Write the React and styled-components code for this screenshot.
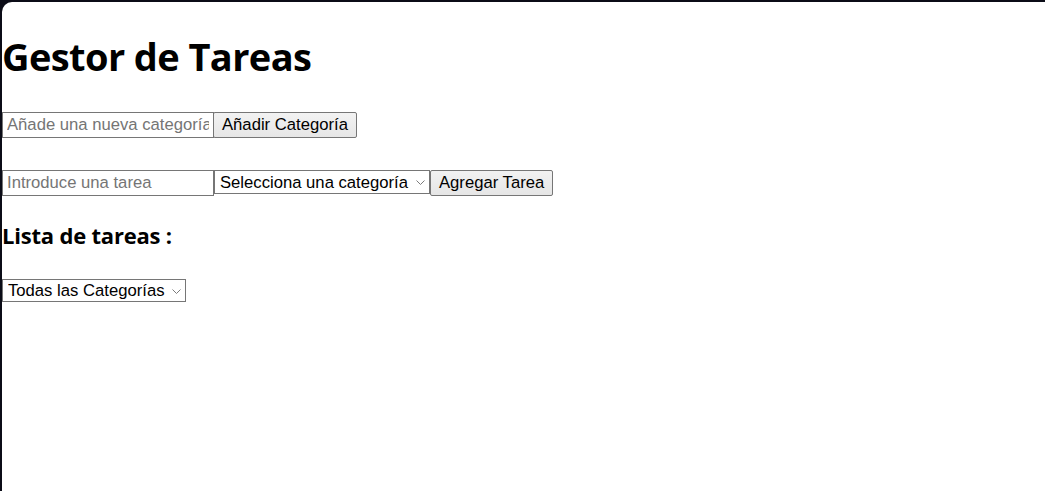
import React from "react";
import styled, { createGlobalStyle } from "styled-components";

const GlobalStyle = createGlobalStyle`
  html, body {
    margin: 0;
    height: 100%;
    background: #0b0c17;
  }
  body {
    padding: 2px 0 0 2px;
    box-sizing: border-box;
    overflow: hidden;
  }
  #root {
    height: 100%;
  }
`;

const Window = styled.div`
  height: 100%;
  background: #ffffff;
  border-top-left-radius: 10px;
  display: flex;
  flex-direction: column;
  align-items: flex-start;
  color: #000;
`;

const Title = styled.h1`
  margin: 31px 0 0 0;
  font-family: "Open Sans", "Noto Sans", sans-serif;
  font-weight: 700;
  font-size: 38px;
  line-height: 46px;
  letter-spacing: -0.6px;
`;

const Subtitle = styled.h3`
  margin: 24px 0 0 0;
  font-family: "Open Sans", "Noto Sans", sans-serif;
  font-weight: 700;
  font-size: 22px;
  line-height: 30px;
  letter-spacing: -0.2px;
`;

const FormRow = styled.div`
  display: flex;
  align-items: flex-start;
  margin-top: ${(p) => p.$top}px;
`;

const TextInput = styled.input`
  box-sizing: border-box;
  width: 212px;
  height: 26px;
  margin: 0;
  padding: 0 4px;
  border: 1px solid #767676;
  border-radius: 0;
  font-family: "Liberation Sans", Arial, sans-serif;
  font-size: 16.67px;
  color: #000;
  background: #fff;
  outline: none;
  &::placeholder {
    color: #757575;
  }
`;

const Button = styled.button`
  box-sizing: border-box;
  height: 26px;
  margin: 0 0 0 ${(p) => p.$shift || 0}px;
  padding: 0 8px;
  border: 1px solid #767676;
  border-radius: 2px;
  background: linear-gradient(#f2f2f2, #e6e6e6);
  font-family: "Liberation Sans", Arial, sans-serif;
  font-size: 16.67px;
  color: #000;
  cursor: pointer;
`;

const SelectWrap = styled.div`
  position: relative;
  margin-top: ${(p) => p.$top || 0}px;
`;

const Select = styled.select`
  box-sizing: border-box;
  display: block;
  width: ${(p) => p.$width}px;
  height: ${(p) => p.$height}px;
  margin: 0;
  padding: 0 20px 0 5px;
  border: 1px solid #767676;
  border-radius: 0;
  appearance: none;
  background: #fff;
  font-family: "Liberation Sans", Arial, sans-serif;
  font-size: 16.67px;
  color: #000;
  outline: none;
`;

const Chevron = styled.svg`
  position: absolute;
  right: 5px;
  top: 50%;
  margin-top: -2px;
  pointer-events: none;
`;

const Arrow = () => (
  <Chevron width="9" height="5" viewBox="0 0 9 5">
    <path d="M0.5 0.5 L4.5 4.5 L8.5 0.5" fill="none" stroke="#7b7b7b" strokeWidth="1" />
  </Chevron>
);

const App = () => {
  return (
    <>
      <GlobalStyle />
      <Window>
        <Title>Gestor de Tareas</Title>
        <FormRow $top={33}>
          <TextInput placeholder="Añade una nueva categoría" />
          <Button $shift={-1}>Añadir Categoría</Button>
        </FormRow>
        <FormRow $top={32}>
          <TextInput placeholder="Introduce una tarea" />
          <SelectWrap>
            <Select $width={216} $height={24} defaultValue="">
              <option value="">Selecciona una categoría</option>
            </Select>
            <Arrow />
          </SelectWrap>
          <Button>Agregar Tarea</Button>
        </FormRow>
        <Subtitle>Lista de tareas :</Subtitle>
        <SelectWrap $top={29}>
          <Select $width={184} $height={23} defaultValue="all">
            <option value="all">Todas las Categorías</option>
          </Select>
          <Arrow />
        </SelectWrap>
      </Window>
    </>
  );
};

export default App;
